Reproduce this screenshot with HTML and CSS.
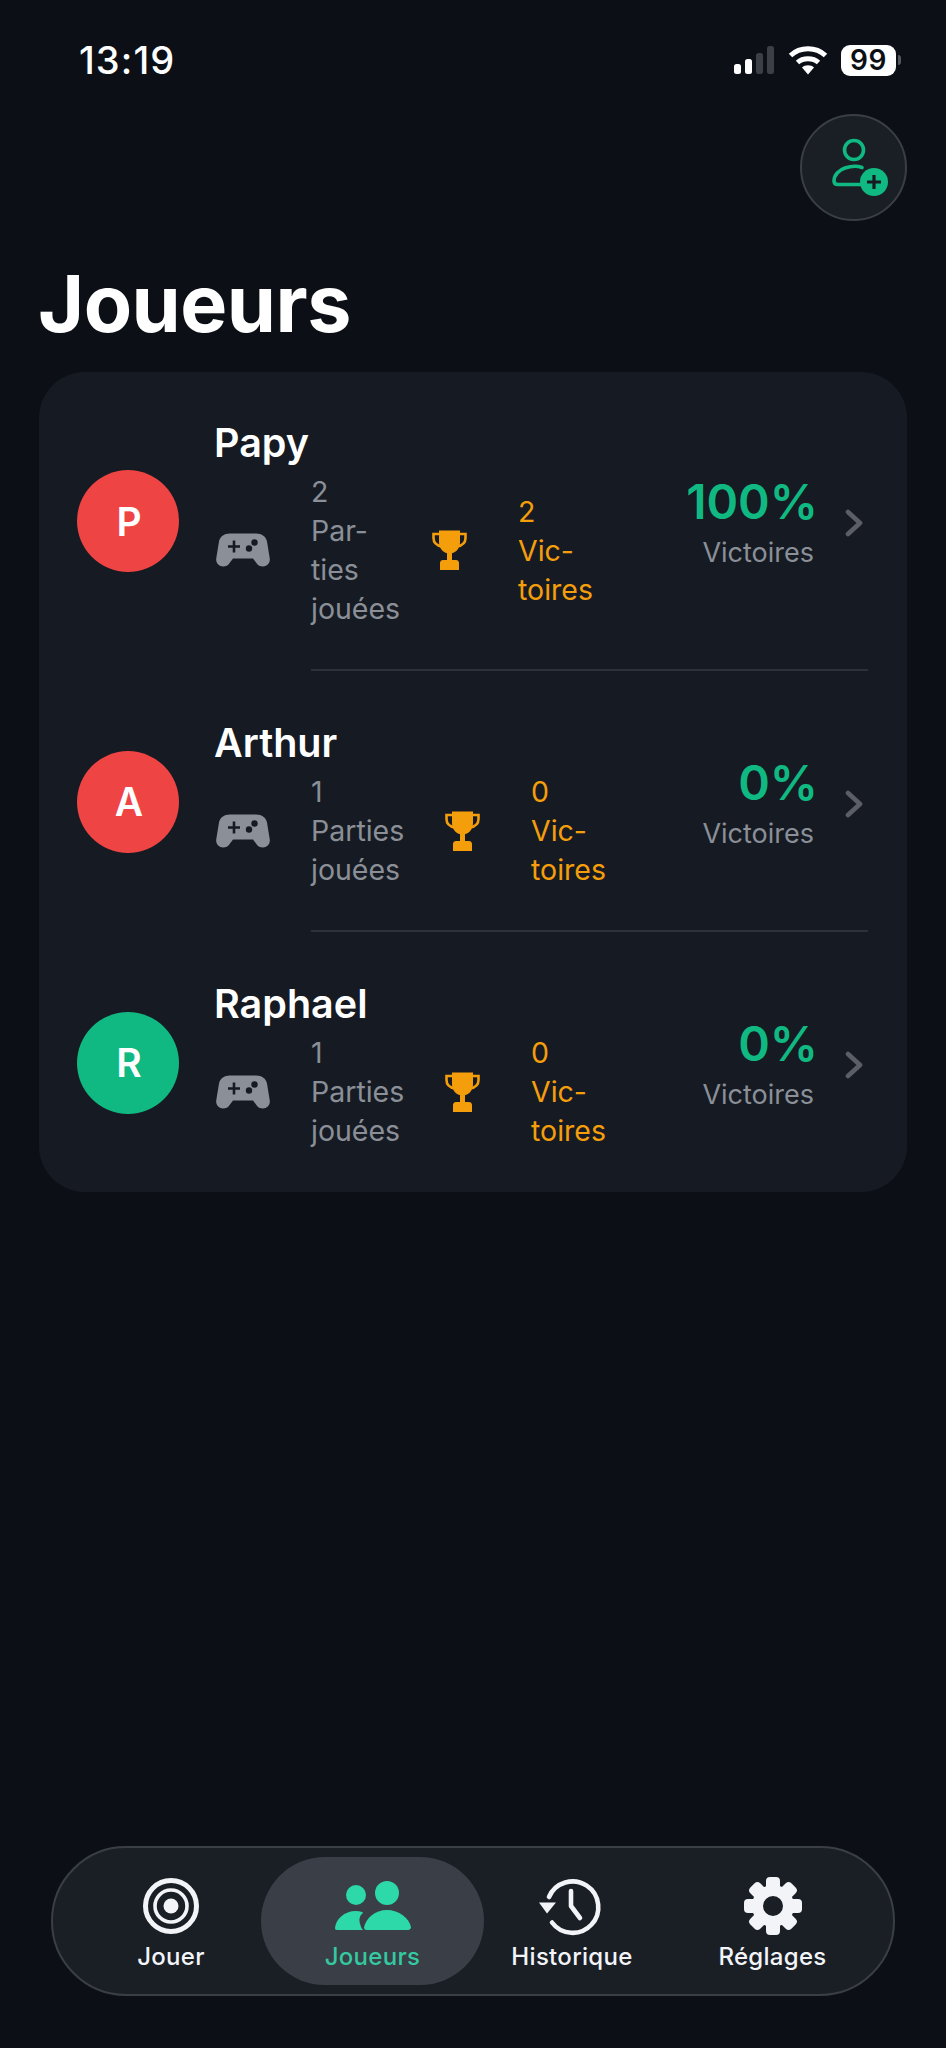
FILE: index.html
```html
<!DOCTYPE html>
<html lang="fr">
<head>
<meta charset="utf-8">
<title>Joueurs</title>
<link rel="stylesheet" href="styles.css">
</head>
<body>
<svg class="sprite" aria-hidden="true">
  <symbol id="pad" viewBox="0 0 54 34">
    <path fill="#8b8f97" d="M14 0.5H40C46 0.5 50 3.5 51 8.5L53.7 25C54.6 30 51 33.5 47 33.5C44 33.5 42 32.5 40 29.5L37 25.5H17L14 29.5C12 32.5 10 33.5 7 33.5C3 33.5 -0.6 30 0.3 25L3 8.5C4 3.5 8 0.5 14 0.5Z"/>
    <path stroke="#161b23" stroke-width="2.6" fill="none" d="M12 13.5H24M18 7.5V19.5"/>
    <circle cx="33" cy="15.5" r="3.2" fill="#161b23"/>
    <circle cx="38.5" cy="9.5" r="3.2" fill="#161b23"/>
  </symbol>
  <symbol id="cup" viewBox="0 0 35 40">
    <path fill="#f59e0b" d="M7 0.5H28V12C28 19 23 23.5 17.5 23.5C12 23.5 7 19 7 12Z"/>
    <path fill="none" stroke="#f59e0b" stroke-width="2.6" d="M8 4H1.5V8C1.5 12.500 4.500 15.500 10 16.500M27 4H33.500V8C33.500 12.500 30.500 15.500 25 16.500"/>
    <path fill="#f59e0b" d="M15 22H20V30H24C26 30 27 31.500 27 33V40H8V33C8 31.500 9 30 11 30H15Z"/>
  </symbol>
</svg>

<header class="status">
  <span class="time">13:19</span>
  <div class="status-icons">
    <div class="signal">
      <i class="bar bar-1"></i><i class="bar bar-2"></i><i class="bar bar-3"></i><i class="bar bar-4"></i>
    </div>
    <svg class="wifi" viewBox="0 0 40 30">
      <path fill="none" stroke="#fff" stroke-width="5" d="M2.500 10.500C12 1.500 28 1.500 37.500 10.500"/>
      <path fill="none" stroke="#fff" stroke-width="5" d="M9.500 17.500C15 12.500 25 12.500 30.500 17.500"/>
      <path fill="#fff" d="M14 22.500C17 19.500 23 19.500 26 22.500L20 29.500Z"/>
    </svg>
    <div class="battery"><span class="battery-level">99</span></div>
    <i class="battery-nub"></i>
  </div>
</header>

<div class="actions">
  <button class="add-btn" aria-label="Ajouter">
    <svg class="add-icon" viewBox="-8 -5 70 70">
      <circle cx="27" cy="12" r="9.500" fill="none" stroke="#10b981" stroke-width="3.600"/>
      <path fill="none" stroke="#10b981" stroke-width="3.600" stroke-linecap="round" d="M35 29.500C31 28 24 28 18 30C12 32 7 37 7 43C7 45 8 46.500 11 46.500H36"/>
      <circle cx="47" cy="44" r="14" fill="#10b981"/>
      <path stroke="#161b23" stroke-width="3.200" d="M40 44H54M47 37V51"/>
    </svg>
  </button>
</div>

<h1 class="title">Joueurs</h1>

<section class="card">
  <article class="row">
    <div class="avatar avatar-red"><span class="initial">P</span></div>
    <div class="body">
      <div class="name">Papy</div>
      <div class="stats">
        <svg class="pad"><use href="#pad"/></svg>
        <div class="stat-text played-narrow">2<br>Par-<br>ties<br>jouées</div>
        <svg class="cup"><use href="#cup"/></svg>
        <div class="stat-text wins">2<br>Vic-<br>toires</div>
      </div>
    </div>
    <div class="rate"><div class="pct">100%</div><div class="pct-label">Victoires</div></div>
    <svg class="chev" viewBox="0 0 18 28"><path fill="none" stroke="#5b5e67" stroke-width="4.600" stroke-linecap="round" stroke-linejoin="round" d="M3 3L15 14L3 25"/></svg>
  </article>
  <hr class="sep">
  <article class="row">
    <div class="avatar avatar-red"><span class="initial">A</span></div>
    <div class="body">
      <div class="name">Arthur</div>
      <div class="stats">
        <svg class="pad"><use href="#pad"/></svg>
        <div class="stat-text played-wide">1<br>Parties<br>jouées</div>
        <svg class="cup"><use href="#cup"/></svg>
        <div class="stat-text wins">0<br>Vic-<br>toires</div>
      </div>
    </div>
    <div class="rate"><div class="pct">0%</div><div class="pct-label">Victoires</div></div>
    <svg class="chev" viewBox="0 0 18 28"><path fill="none" stroke="#5b5e67" stroke-width="4.600" stroke-linecap="round" stroke-linejoin="round" d="M3 3L15 14L3 25"/></svg>
  </article>
  <hr class="sep">
  <article class="row">
    <div class="avatar avatar-green"><span class="initial">R</span></div>
    <div class="body">
      <div class="name">Raphael</div>
      <div class="stats">
        <svg class="pad"><use href="#pad"/></svg>
        <div class="stat-text played-wide">1<br>Parties<br>jouées</div>
        <svg class="cup"><use href="#cup"/></svg>
        <div class="stat-text wins">0<br>Vic-<br>toires</div>
      </div>
    </div>
    <div class="rate"><div class="pct">0%</div><div class="pct-label">Victoires</div></div>
    <svg class="chev" viewBox="0 0 18 28"><path fill="none" stroke="#5b5e67" stroke-width="4.600" stroke-linecap="round" stroke-linejoin="round" d="M3 3L15 14L3 25"/></svg>
  </article>
</section>

<nav class="tabbar">
  <a class="tab tab-first">
    <svg class="tab-icon" viewBox="0 0 60 60">
      <circle cx="30" cy="30" r="25.500" fill="none" stroke="#f2f4f8" stroke-width="5"/>
      <circle cx="30" cy="30" r="16" fill="none" stroke="#f2f4f8" stroke-width="3.600"/>
      <circle cx="30" cy="30" r="7.500" fill="#f2f4f8"/>
    </svg>
    <span class="tab-label">Jouer</span>
  </a>
  <a class="tab tab-active">
    <svg class="tab-icon tab-icon-users" viewBox="0 -2 76 60">
      <circle cx="21" cy="17" r="10" fill="#2dd9a8"/>
      <circle cx="52" cy="15" r="12" fill="#2dd9a8"/>
      <path fill="#2dd9a8" d="M29 52H2C0.500 52 0 51 0 50C1 41 9 33 21 33C23 33 25 33.500 27 34C29 34.500 27 36 26 37C23 41 25 46 26.500 50C27 51 28 52 29 52Z"/>
      <path fill="#2dd9a8" d="M32 52C29.500 52 29 50.500 29 49.500C31 40 40 32 52 32C64 32 74 40 76 49C76 50.500 75 52 73 52Z"/>
    </svg>
    <span class="tab-label">Joueurs</span>
  </a>
  <a class="tab">
    <svg class="tab-icon tab-icon-history" viewBox="0 0 66 60">
      <path fill="none" stroke="#f2f4f8" stroke-width="4.600" stroke-linecap="round" d="M10 21A25.700 25.700 0 1 1 13 46.500"/>
      <path fill="#f2f4f8" d="M0 26.500H17L8 37.500Z"/>
      <path fill="none" stroke="#f2f4f8" stroke-width="4.600" stroke-linecap="round" stroke-linejoin="round" d="M32 15V30L41 42"/>
    </svg>
    <span class="tab-label">Historique</span>
  </a>
  <a class="tab">
    <svg class="tab-icon" viewBox="0 0 60 60">
      <circle cx="30" cy="30" r="15.500" fill="none" stroke="#f2f4f8" stroke-width="11"/>
      <g fill="#f2f4f8">
        <rect x="23" y="1" width="14" height="14" rx="4"/>
        <rect x="23" y="45" width="14" height="14" rx="4"/>
        <rect x="1" y="23" width="14" height="14" rx="4"/>
        <rect x="45" y="23" width="14" height="14" rx="4"/>
        <rect class="tooth-a" x="23" y="1" width="14" height="14" rx="4"/>
        <rect class="tooth-b" x="23" y="1" width="14" height="14" rx="4"/>
        <rect class="tooth-c" x="23" y="1" width="14" height="14" rx="4"/>
        <rect class="tooth-d" x="23" y="1" width="14" height="14" rx="4"/>
      </g>
    </svg>
    <span class="tab-label">Réglages</span>
  </a>
</nav>
</body>
</html>
```
FILE: styles.css
```css
* { box-sizing: border-box; }
html, body { margin: 0; padding: 0; }
body {
  width: 946px;
  height: 2048px;
  overflow: hidden;
  background: #0c1016;
  color: #fff;
  font-family: Inter, "Liberation Sans", sans-serif;
  display: flex;
  flex-direction: column;
}
.sprite { display: none; }

/* Status bar */
.status {
  display: flex;
  justify-content: space-between;
  align-items: center;
  height: 40px;
  margin-top: 40px;
  padding: 0 45px 0 79px;
  flex: none;
}
.time { font-size: 38px; font-weight: 500; line-height: 40px; letter-spacing: 1.1px; }
.status-icons { display: flex; align-items: center; }
.signal { display: flex; align-items: flex-end; gap: 4px; height: 28px; margin-right: 14px; }
.bar { display: block; width: 7px; border-radius: 2.5px; background: #fff; }
.bar-1 { height: 10px; }
.bar-2 { height: 15px; }
.bar-3 { height: 21px; background: #3c3f45; }
.bar-4 { height: 28px; background: #3c3f45; }
.wifi { width: 40px; height: 30px; margin-right: 13px; }
.battery {
  width: 55px;
  height: 31px;
  background: #fff;
  border-radius: 9px;
  display: flex;
  align-items: center;
  justify-content: center;
}
.battery-level { color: #0c0f15; font-size: 28px; font-weight: 600; line-height: 31px; letter-spacing: 0.5px; }
.battery-nub { display: block; width: 3px; height: 10px; margin-left: 2px; background: #55585e; border-radius: 0 3px 3px 0; }

/* Header */
.actions { display: flex; justify-content: flex-end; padding-right: 39px; margin-top: 34px; flex: none; }
.add-btn {
  width: 107px;
  height: 107px;
  border-radius: 50%;
  background: #1a1f26;
  border: 2px solid #3a3e45;
  padding: 0;
  display: flex;
  align-items: center;
  justify-content: center;
}
.add-icon { width: 70px; height: 70px; }
.title {
  margin: 37px 0 24px 38px;
  font-size: 79px;
  line-height: 90px;
  font-weight: 700;
  letter-spacing: -0.5px;
  flex: none;
}

/* Card */
.card {
  margin: 0 39px;
  background: #161b23;
  border-radius: 46px;
  flex: none;
}
.row {
  display: flex;
  align-items: center;
  padding: 48px 44px 42px 38px;
}
.avatar {
  width: 102px;
  height: 102px;
  border-radius: 50%;
  flex: none;
  display: flex;
  align-items: center;
  justify-content: center;
  font-size: 39px;
  font-weight: 600;
  margin: 0 35px 6px 0;
}
.initial { margin-left: 2px; }
.avatar-red { background: #ef4444; }
.avatar-green { background: #10b981; }
.body { flex: 1; min-width: 0; }
.name { font-size: 39.5px; font-weight: 600; line-height: 46px; margin-bottom: 6px; }
.stats { display: flex; align-items: center; padding-left: 2px; }
.pad { width: 54px; height: 34px; flex: none; margin-right: 41px; }
.cup { width: 35px; height: 40px; flex: none; margin-right: 51px; }
.stat-text { font-size: 28.5px; line-height: 39px; color: #8b8f97; }
.played-narrow { width: 121px; }
.played-wide { width: 134px; }
.wins { color: #f59e0b; }
.rate { flex: none; text-align: right; margin: 0 31px 3px 0; }
.pct { font-size: 48px; font-weight: 600; line-height: 58px; color: #10b981; margin: 0 -4px 2px 0; }
.pct-label { font-size: 27px; line-height: 39px; color: #8b8f97; }
.chev { width: 18px; height: 28px; flex: none; margin-bottom: 2px; }
.sep {
  border: 0;
  height: 2px;
  margin: -1px 39px 1px 272px;
  background: #2d3139;
}

/* Tab bar */
.tabbar {
  margin: auto 51px 52px;
  height: 150px;
  padding: 9px 8px;
  border-radius: 75px;
  background: #1a1f26;
  border: 2px solid #3a3e45;
  display: grid;
  grid-template-columns: 200px 223px 176px 1fr;
  flex: none;
}
.tab {
  display: flex;
  flex-direction: column;
  align-items: center;
  padding-top: 19px;
  border-radius: 65px;
  color: #f2f4f8;
}
.tab-first { padding-left: 20px; }
.tab-active { background: #3a3e46; color: #34c9a0; }
.tab-icon { width: 60px; height: 60px; flex: none; }
.tab-icon-users { width: 76px; }
.tab-icon-history { width: 66px; }
.tab-label { font-size: 24px; font-weight: 500; line-height: 30px; letter-spacing: 0.3px; margin-top: 6px; }
.tooth-a { transform: rotate(45deg); transform-origin: 30px 30px; }
.tooth-b { transform: rotate(135deg); transform-origin: 30px 30px; }
.tooth-c { transform: rotate(225deg); transform-origin: 30px 30px; }
.tooth-d { transform: rotate(315deg); transform-origin: 30px 30px; }
```
